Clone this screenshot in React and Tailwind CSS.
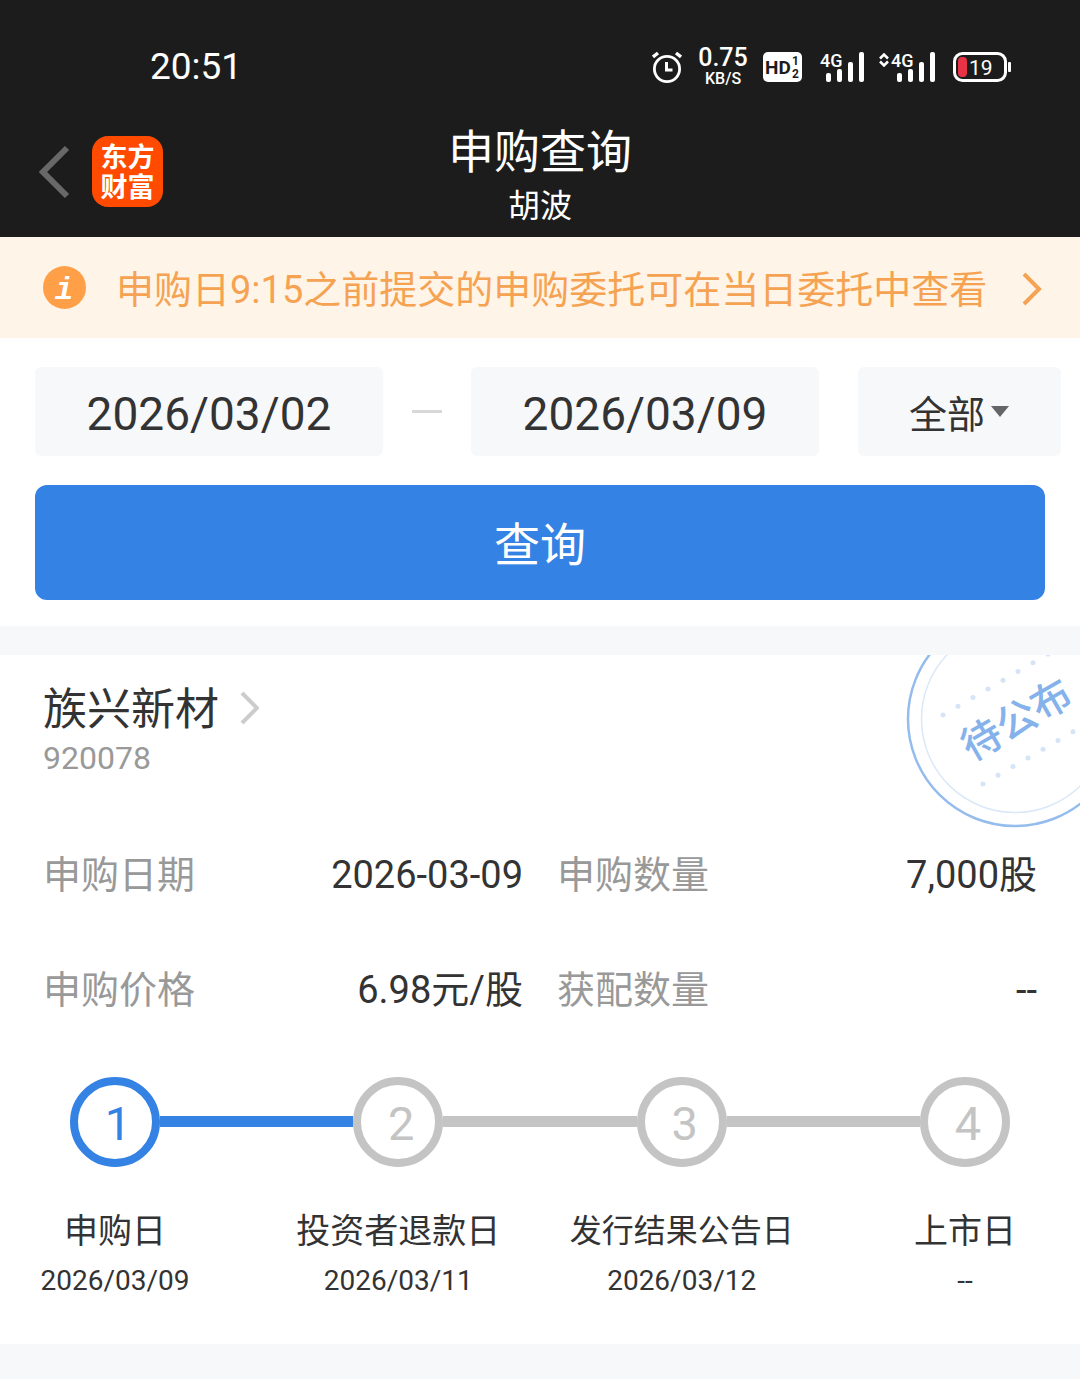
import { useState } from 'react';

const details = [
  { label: '申购日期', value: '2026-03-09' },
  { label: '申购数量', value: '7,000股' },
  { label: '申购价格', value: '6.98元/股' },
  { label: '获配数量', value: '--' },
];

const steps = [
  { title: '申购日', date: '2026/03/09' },
  { title: '投资者退款日', date: '2026/03/11' },
  { title: '发行结果公告日', date: '2026/03/12', long: true },
  { title: '上市日', date: '--' },
];

// 印章上下两排小圆点
const topDots = [0, 1, 2, 3, 4, 5, 6, 7, 8];
const bottomDots = [0, 1, 2, 3, 4, 5, 6, 7];

function SignalBars() {
  return (
    <g fill="#fff">
      <rect x="6" y="24" width="5" height="9" rx="2" />
      <rect x="17" y="20" width="5" height="13" rx="2" />
      <rect x="28" y="13" width="5" height="20" rx="2" />
      <rect x="39" y="3" width="5" height="30" rx="2" />
    </g>
  );
}

function StatusBar() {
  return (
    <div className="flex h-[120px] items-center justify-between pt-[13px] pr-[69px] pl-[150px]">
      <span className="pt-px text-[37px] leading-10">20:51</span>
      <div className="flex items-center">
        <svg className="h-8 w-[30px]" viewBox="0 0 30 32" fill="none" stroke="#fff">
          <circle cx="15" cy="18" r="12.6" strokeWidth="2.8" />
          <path d="M14.5 11v8h6" strokeWidth="3" />
          <path d="M1 6l5-4M29 6l-5-4" strokeWidth="3.4" />
        </svg>
        <div className="ml-4 flex w-[50px] flex-col items-center font-medium">
          <span className="text-[25px] leading-[24px]">0.75</span>
          <span className="text-[16px] leading-[17px]">KB/S</span>
        </div>
        <svg className="ml-[15px] h-[30px] w-[39px]" viewBox="0 0 39 30">
          <rect width="39" height="30" rx="5" fill="#fff" />
          <g fill="#1c1c1c" className="font-bold">
            <text x="2" y="22" fontSize="19">HD</text>
            <text x="29" y="13" fontSize="12">1</text>
            <text x="29" y="26" fontSize="12">2</text>
          </g>
        </svg>
        <svg className="ml-[18px] h-9 w-[45px] overflow-visible" viewBox="0 0 45 36">
          <text x="0" y="18" fontSize="18" fill="#fff" className="font-medium">4G</text>
          <SignalBars />
        </svg>
        <svg className="ml-[14px] h-9 w-[57px] overflow-visible" viewBox="0 0 57 36">
          <path d="M1 9.500l4-4 4 4M1 12.500l4 4 4-4" fill="none" stroke="#fff" strokeWidth="2.500" />
          <text x="12" y="18" fontSize="18" fill="#fff" className="font-medium">4G</text>
          <g transform="translate(12 0)">
            <SignalBars />
          </g>
        </svg>
        <svg className="ml-[17px] h-[30px] w-[58px]" viewBox="0 0 58 30">
          <rect x="1.500" y="1.500" width="51" height="27" rx="8" fill="none" stroke="#fff" strokeWidth="3" />
          <rect x="5" y="5" width="9" height="20" rx="4" fill="#e83346" />
          <text x="16" y="23" fontSize="21" fill="#fff">19</text>
          <rect x="55" y="10" width="3" height="10" rx="1" fill="#fff" />
        </svg>
      </div>
    </div>
  );
}

function Header() {
  return (
    <header className="bg-[#1c1c1c] text-white">
      <StatusBar />
      <div className="grid h-[117px] grid-cols-[1fr_auto_1fr]">
        <div className="flex items-start pt-4 pl-[38px]">
          <button aria-label="返回" className="mt-[9px]">
            <svg className="h-[54px] w-8" viewBox="0 0 32 54" fill="none" stroke="#686868" strokeWidth="6">
              <path d="M29 3L5 27l24 24" />
            </svg>
          </button>
          <div className="ml-[22px] flex h-[71px] w-[71px] flex-col items-center justify-center rounded-2xl bg-[#ff4a00] pt-[2px] text-[27px] leading-[30px] font-bold">
            <span>东方</span>
            <span>财富</span>
          </div>
        </div>
        <div className="flex flex-col items-center">
          <h1 className="text-[46px] leading-[64px]">申购查询</h1>
          <p className="text-[32px] leading-[44px]">胡波</p>
        </div>
      </div>
    </header>
  );
}

function Notice() {
  return (
    <a href="#orders" className="flex h-[101px] items-center bg-[#fff4e8] pr-[37px] pl-[43px] text-[38px] text-[#f5a352]">
      <svg className="h-[43px] w-[43px] shrink-0" viewBox="0 0 43 43">
        <circle cx="21.500" cy="21.500" r="21.500" fill="#ffa048" />
        <text x="21" y="33" textAnchor="middle" fontSize="31" fill="#fff" className="font-['Liberation_Mono'] font-bold italic">i</text>
      </svg>
      <span className="ml-[30px] pt-[5px] whitespace-nowrap">申购日9:15之前提交的申购委托可在当日委托中查看</span>
      <svg className="mt-[3px] ml-auto h-[34px] w-[22px] shrink-0" viewBox="0 0 22 34" fill="none" stroke="currentColor" strokeWidth="4">
        <path d="M3 2l15 15L3 32" />
      </svg>
    </a>
  );
}

function Filters() {
  const [start, setStart] = useState('2026/03/02');
  const [end, setEnd] = useState('2026/03/09');
  const [type, setType] = useState('全部');

  return (
    <section className="bg-white pt-[29px] pb-[26px]">
      <div className="flex items-center pr-[19px] pl-[35px]">
        <input
          aria-label="开始日期"
          className="h-[89px] min-w-0 flex-1 rounded-md bg-[#f7f8fa] pt-1 text-center text-[46px]"
          value={start}
          onChange={(e) => setStart(e.target.value)}
        />
        <span className="mx-[29px] h-[3px] w-[30px] bg-[#d8d8d8]" />
        <input
          aria-label="结束日期"
          className="h-[89px] min-w-0 flex-1 rounded-md bg-[#f7f8fa] pt-1 text-center text-[46px]"
          value={end}
          onChange={(e) => setEnd(e.target.value)}
        />
        <div className="relative ml-[39px]">
          <select
            aria-label="申购类型"
            className="h-[89px] w-[203px] appearance-none rounded-md bg-[#f7f8fa] pt-2 pl-[51px] text-[38px]"
            value={type}
            onChange={(e) => setType(e.target.value)}
          >
            <option>全部</option>
            <option>新股</option>
            <option>新债</option>
          </select>
          <svg className="pointer-events-none absolute top-[39px] right-[52px] h-[11px] w-[18px]" viewBox="0 0 18 11">
            <path d="M0 0h18l-9 11z" fill="#666" />
          </svg>
        </div>
      </div>
      <div className="mt-[29px] px-[35px]">
        <button className="h-[115px] w-full rounded-xl bg-[#3482e3] pt-[5px] text-[46px] text-white">查询</button>
      </div>
    </section>
  );
}

function Stamp() {
  return (
    <svg className="absolute top-0 right-0 h-[180px] w-[200px]" viewBox="0 0 200 180" fill="none">
      <circle cx="135" cy="64" r="107" stroke="#94bced" strokeWidth="2.500" />
      <circle cx="135" cy="64" r="93.500" stroke="#dbe8f8" strokeWidth="1.500" />
      <g fill="#d5e4f7">
        {topDots.map((n) => (
          <circle key={n} cx={63 + n * 15} cy={60 - n * 8.7} r="2.500" />
        ))}
        {bottomDots.map((n) => (
          <circle key={n} cx={103 + n * 15} cy={129 - n * 8.7} r="2.500" />
        ))}
      </g>
      <text
        x="136"
        y="79"
        textAnchor="middle"
        fontSize="40"
        fill="#85b2eb"
        transform="rotate(-30 136 64)"
        className="font-medium"
      >
        待公布
      </text>
    </svg>
  );
}

function Steps({ current }) {
  return (
    <ol className="mt-[29px] flex px-[70px]">
      {steps.map((step, index) => (
        <li key={step.title} className={index > 0 ? 'flex flex-1' : 'flex'}>
          {index > 0 && (
            <span className={`mt-[39px] h-[11px] flex-1 ${index === current ? 'bg-[#3482e3]' : 'bg-[#c4c4c4]'}`} />
          )}
          <div className="flex w-[90px] flex-col items-center whitespace-nowrap">
            <span
              className={`flex h-[90px] w-[90px] items-center justify-center rounded-full border-8 pt-1 pl-[6px] text-[47px] ${
                index < current ? 'border-[#3482e3] text-[#3482e3]' : 'border-[#c4c4c4] text-[#c4c4c4]'
              }`}
            >
              {index + 1}
            </span>
            <span className={`mt-[39px] leading-[50px] ${step.long ? 'text-[32px]' : 'text-[34px]'}`}>{step.title}</span>
            <span className="text-[28px] leading-[49px]">{step.date}</span>
          </div>
        </li>
      ))}
    </ol>
  );
}

function StockCard() {
  return (
    <section className="relative mt-[29px] overflow-hidden bg-white pt-[25px] pb-[39px]">
      <Stamp />
      <div className="px-[43px]">
        <a href="#stock" className="flex items-center">
          <h2 className="pt-1 text-[44px] leading-[52px]">族兴新材</h2>
          <svg className="ml-5 h-[34px] w-5" viewBox="0 0 20 34" fill="none" stroke="#ccc" strokeWidth="4">
            <path d="M3 2l15 15L3 32" />
          </svg>
        </a>
        <p className="text-[32px] leading-[44px] text-[#999]">920078</p>
        <dl className="mt-[38px] grid grid-cols-2 gap-x-[34px]">
          {details.map((item) => (
            <div key={item.label} className="flex h-[115px] items-center justify-between text-[38px]">
              <dt className="text-[#999]">{item.label}</dt>
              <dd>{item.value}</dd>
            </div>
          ))}
        </dl>
      </div>
      <Steps current={1} />
    </section>
  );
}

export default function App() {
  return (
    <div className="min-h-screen bg-[#f7f8fa] pb-[35px] font-[Roboto,'Noto_Sans_CJK_SC',sans-serif] text-[#333]">
      <Header />
      <Notice />
      <main>
        <Filters />
        <StockCard />
      </main>
    </div>
  );
}
